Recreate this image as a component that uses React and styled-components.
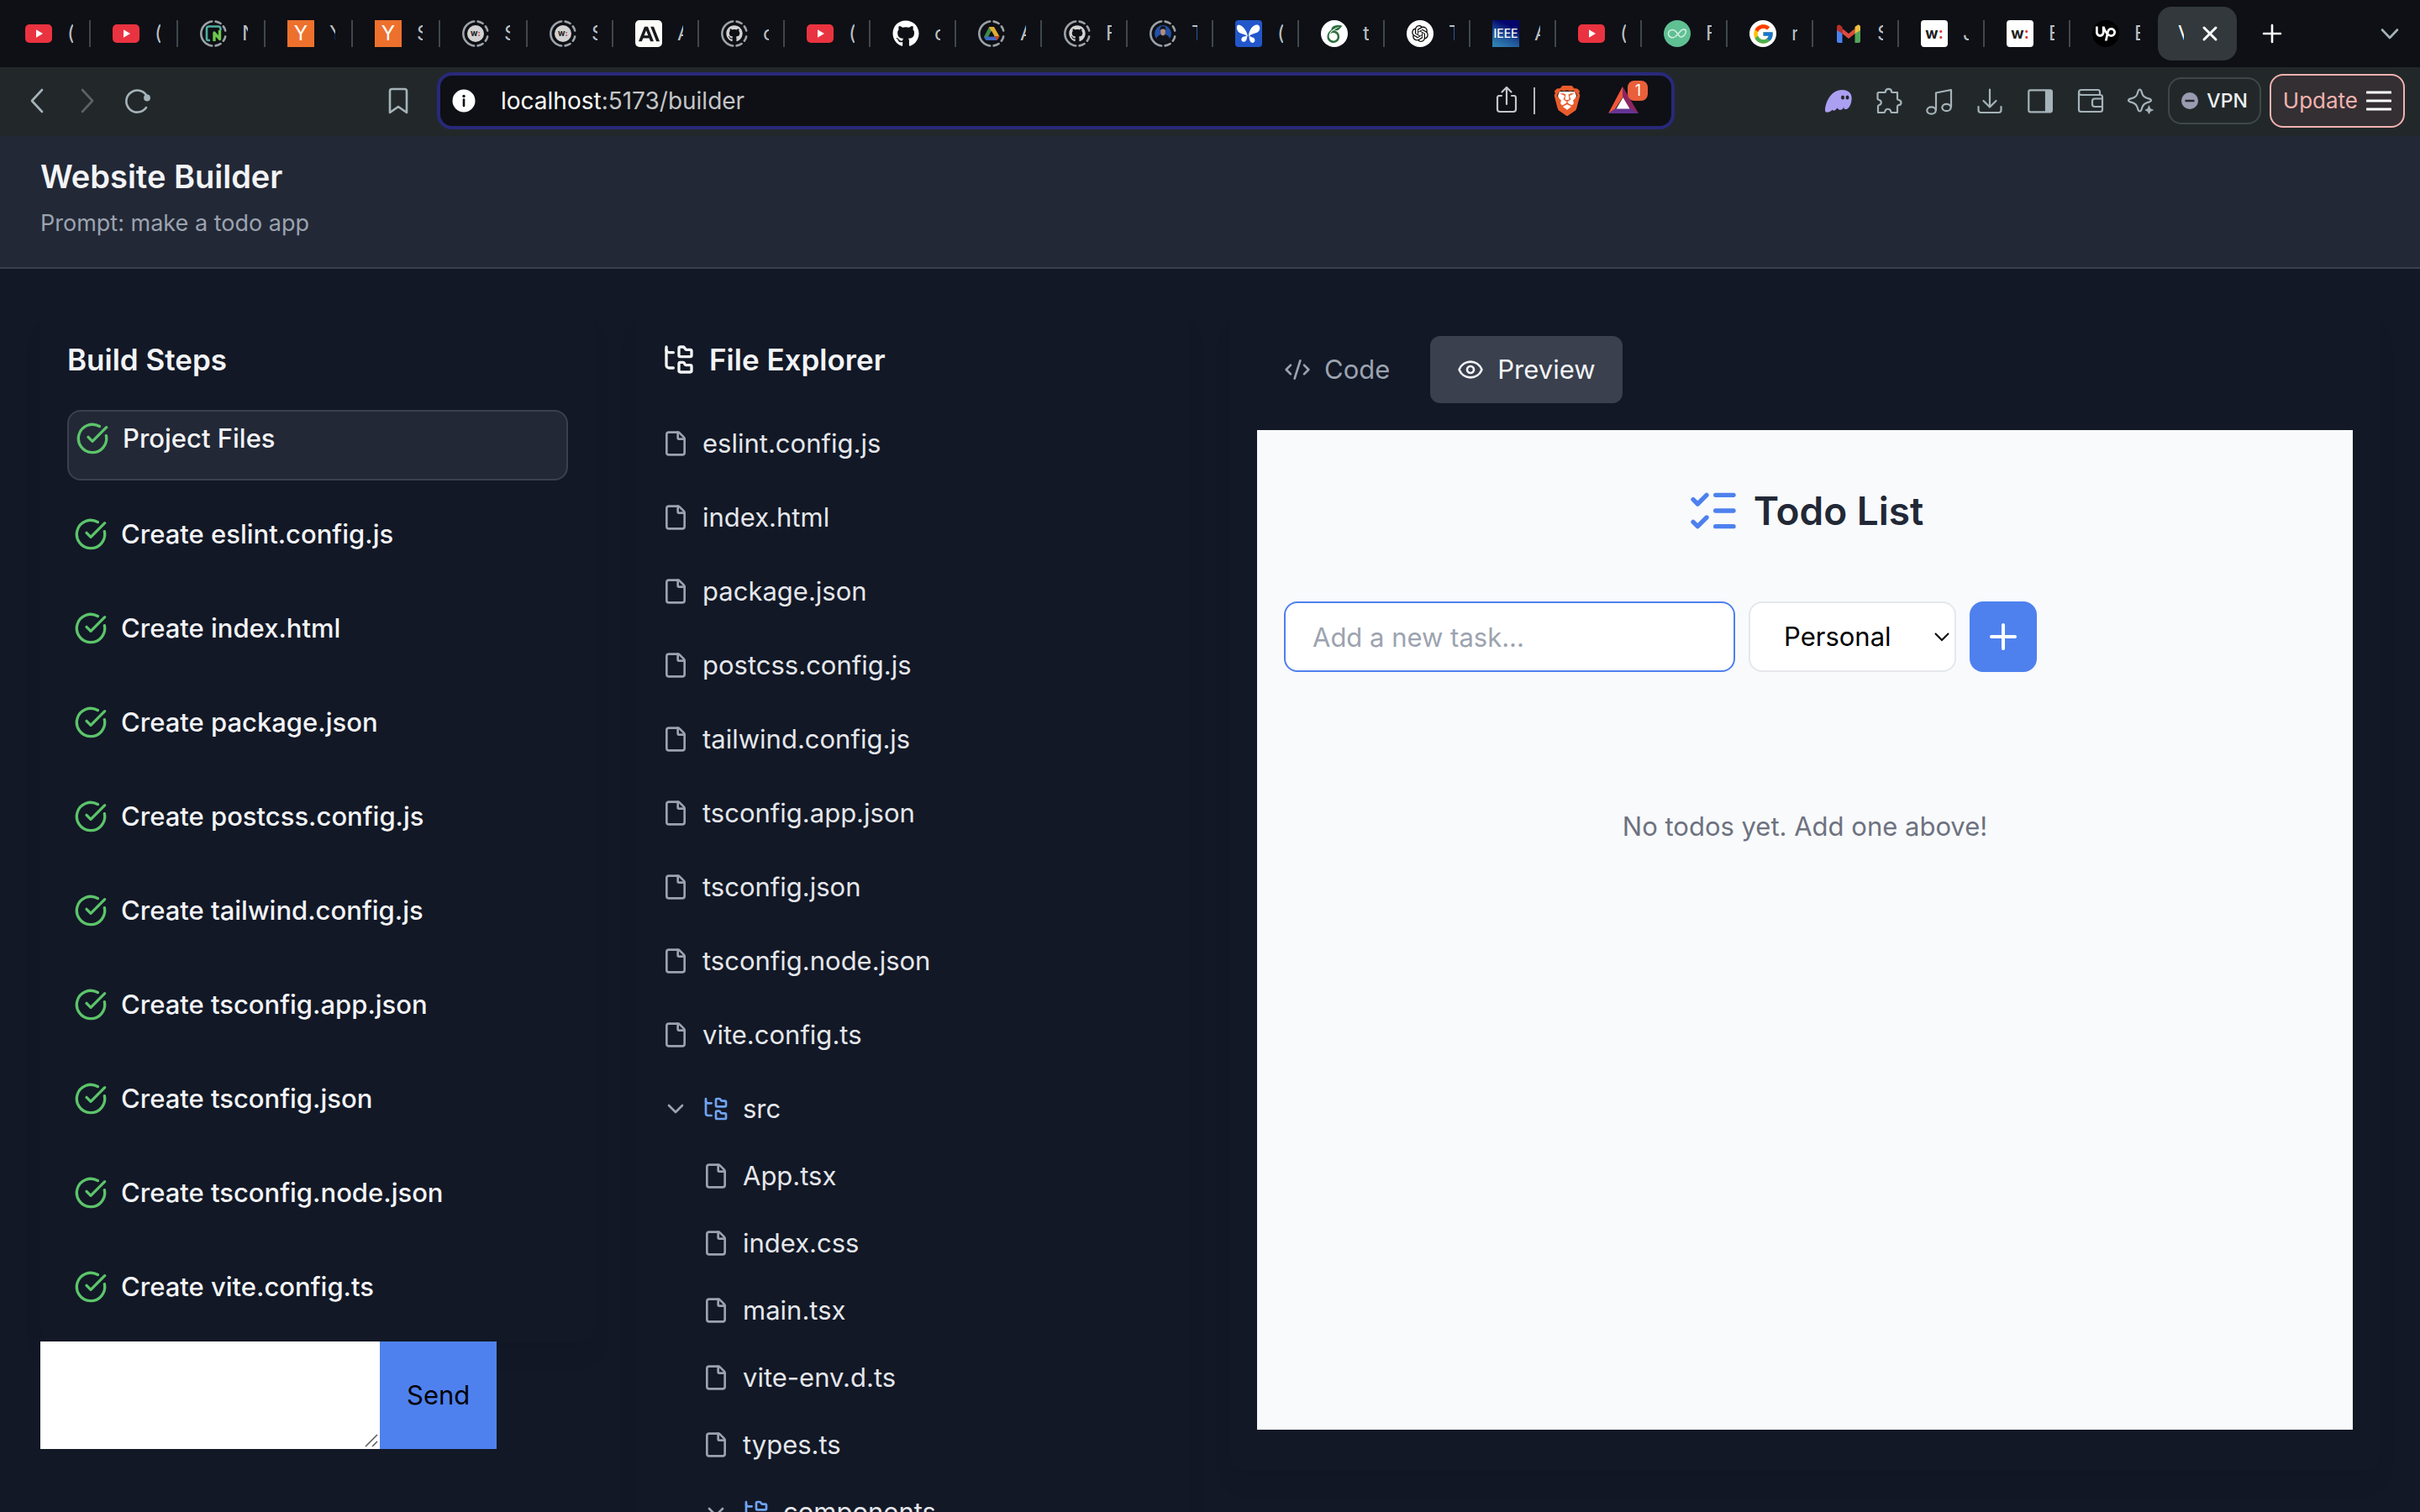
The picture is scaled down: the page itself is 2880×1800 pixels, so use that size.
import React, { useState } from "react";
import styled, { createGlobalStyle, css } from "styled-components";
import { CircleCheckBig, FolderTree, File, ChevronDown, CodeXml, Eye, ListChecks, Plus } from "lucide-react";
import { FaGithub } from "react-icons/fa";
import { FcGoogle } from "react-icons/fc";
import { SiOverleaf, SiUpwork, SiBrave, SiAnthropic } from "react-icons/si";
import { RiOpenaiFill } from "react-icons/ri";

const color = {
  tabBar: "#0e1015",
  tabActive: "#32383b",
  toolbar: "#22282a",
  chromeIcon: "#a5b3b9",
  page: "#121826",
  surface: "#222836",
  line: "#3a404e",
  text: "#f3f4f6",
  file: "#e5e7eb",
  muted: "#9ca3af",
  blue: "#4e81ee",
  folder: "#70a3f3",
  green: "#5cc46a",
};

const GlobalStyle = createGlobalStyle`
  * { box-sizing: border-box; }
  body { margin: 0; background: ${color.page}; }
  button, input, select, textarea { font: inherit; }
`;

const Shell = styled.div`
  display: flex;
  flex-direction: column;
  height: 100vh;
  overflow: hidden;
  background: ${color.page};
  color: ${color.text};
  font-family: Inter, "Liberation Sans", sans-serif;
  font-size: 31px;
  line-height: 48px;
`;

/* ---------- Browser tabs ---------- */

const TabBar = styled.nav`
  flex: none;
  display: flex;
  align-items: center;
  height: 80px;
  padding-left: 4px;
  background: ${color.tabBar};
`;

const Tab = styled.button`
  flex: 0 1 ${(p) => (p.$wide ? 104 : 102)}px;
  display: flex;
  align-items: center;
  height: 32px;
  min-width: 0;
  padding: 0 0 0 26px;
  border: 0;
  background: none;
`;

const TabTitle = styled.span`
  width: 7px;
  margin-left: 18px;
  overflow: hidden;
  color: #bdbfc1;
  font-size: 24px;
  line-height: 32px;
  text-align: left;
`;

const TabDivider = styled.span`
  width: 2px;
  height: 32px;
  margin-left: auto;
  background: #3f474b;
`;

const ActiveTab = styled.div`
  display: flex;
  align-items: center;
  justify-content: space-between;
  width: 94px;
  height: 64px;
  margin-left: 2px;
  padding: 0 12px 0 6px;
  border-radius: 16px;
  background: ${color.tabActive};
`;

const ActiveTitle = styled(TabTitle)`
  color: #ffffff;
`;

const GlyphButton = styled.button`
  flex: none;
  display: flex;
  align-items: center;
  justify-content: center;
  width: 40px;
  height: 40px;
  padding: 0;
  border: 0;
  background: none;
  color: ${(p) => p.$color || color.chromeIcon};
`;

const NewTab = styled(GlyphButton)`
  margin-left: 22px;
`;

const TabSearch = styled(GlyphButton)`
  margin-left: auto;
  margin-right: 16px;
`;

const Favicon = styled.span`
  flex: none;
  display: flex;
  align-items: center;
  justify-content: center;
  width: 32px;
  height: 32px;
  overflow: hidden;
  border-radius: ${(p) => p.$radius || 0}px;
  background: ${(p) => p.$bg || "none"};
  color: ${(p) => p.$color || "#ffffff"};
  font-size: ${(p) => p.$size || 16}px;
  line-height: 32px;
  font-weight: ${(p) => p.$weight || 400};
`;

const Red = styled.span`
  color: #d93a35;
`;

const Ring = ({ children }) => (
  <svg width="32" height="32" viewBox="0 0 32 32">
    <g fill="none" stroke="#9ba2a8" strokeWidth="2.6" strokeLinecap="round">
      <path d="M14.2 1.5A14.6 14.6 0 0 0 14.2 30.5" />
      <path d="M18.6 1.6Q22 2.2 24.6 4" />
      <path d="M27.8 7.4Q29.6 9.8 30.2 12.6" />
      <path d="M30.2 19.4Q29.6 22.2 27.8 24.6" />
      <path d="M24.6 28Q22 29.8 18.6 30.4" />
    </g>
    {children}
  </svg>
);

const icons = {
  youtube: (
    <svg width="32" height="32" viewBox="0 0 32 32">
      <rect y="5" width="32" height="22" rx="5" fill="#ea3340" />
      <path d="M13 11.2L21 16L13 20.8Z" fill="#fff" />
    </svg>
  ),
  neon: (
    <Ring>
      <path d="M12 24H10Q8 24 8 22V10Q8 7.500 10.500 7.500H21.500Q24.400 7.500 24.400 10V12" fill="none" stroke="#4fae9f" strokeWidth="2.600" />
      <path d="M17 25V15L23.500 22.500V12" fill="none" stroke="#6cc74f" strokeWidth="3.400" strokeLinejoin="round" />
    </Ring>
  ),
  yc: <Favicon $bg="#ed712d" $size={24}>Y</Favicon>,
  wRing: (
    <Ring>
      <circle cx="16" cy="16" r="10" fill="#d2d2d2" />
      <text x="16" y="19" textAnchor="middle" fontFamily="Inter, sans-serif" fontWeight="700" fontSize="10" fill="#222">
        w<tspan fill="#c4392f">:</tspan>
      </text>
    </Ring>
  ),
  anthropic: (
    <Favicon $bg="#fbfbf8" $radius={5} $color="#17191c">
      <SiAnthropic size={25} />
    </Favicon>
  ),
  githubRing: (
    <Ring>
      <g transform="translate(6 6)" color="#d2d2d2">
        <FaGithub size={20} />
      </g>
    </Ring>
  ),
  github: <Favicon><FaGithub size={32} /></Favicon>,
  drive: (
    <Ring>
      <path d="M13 8H19L12 20.500L9.500 24L7 20Z" fill="#3f8a48" />
      <path d="M13 8H19L25.500 19.600H19Z" fill="#e2ac33" />
      <path d="M9.800 19.600H22L22 24H9.800L7.200 20.400Z" fill="#3e68c6" />
      <path d="M19.400 19.600H25.500L22.600 24Z" fill="#c9442c" />
      <path d="M16 12.800L19.600 19.300H12.400Z" fill="#0e1015" />
    </Ring>
  ),
  portrait: (
    <Ring>
      <circle cx="16" cy="16" r="10" fill="#2250a6" />
      <path d="M8 22Q10 17.600 13.600 17.200L18.600 17.200Q22.600 17.800 24 22Q21 26 16 26T8 22Z" fill="#121318" />
      <path d="M13.200 10.500H18.800V14.500Q18.600 18 16 18.600Q13.400 18 13.200 14.500Z" fill="#b98e78" />
      <path d="M12.600 12.400Q12 7.200 16 7.200T19.400 12.400Q18.600 10.200 16 10.200T12.600 12.400Z" fill="#16130f" />
    </Ring>
  ),
  butterfly: (
    <svg width="32" height="32" viewBox="0 0 32 32">
      <rect width="32" height="32" rx="4" fill="#2257cc" />
      <path d="M15.200 20C14.500 14 9 5.500 4 5.500C0.800 6 1.500 12 4.500 14.500C7 16.600 12.500 16.500 15.200 20Z" fill="#fff" />
      <path d="M15.800 20C16 12 21 5 26.500 5.500C30.500 6.500 30 12.500 26.500 14.500C23 16.200 18.500 16 15.800 20Z" fill="#fff" />
      <path d="M14 18.500C14.500 22 13 26 9.500 25.800C6.500 25 7 21 9 20C11 19.200 12.500 19.500 14 18.500Z" fill="#fff" />
      <path d="M17 18.500C16 22 17.500 27 21 27C24.500 26 23.500 22 22 21C20 20 18.500 20 17 18.500Z" fill="#fff" />
    </svg>
  ),
  overleaf: <Favicon $bg="#fff" $radius={16} $color="#2d7040"><SiOverleaf size={21} /></Favicon>,
  openai: <Favicon $bg="#fff" $radius={16} $color="#111"><RiOpenaiFill size={24} /></Favicon>,
  ieee: <Favicon $bg="linear-gradient(25deg, #2f7fb0 10%, #1c4a94 45%, #04066e 75%)" $size={14} $weight={500}>IEEE</Favicon>,
  infinity: (
    <svg width="32" height="32" viewBox="0 0 32 32">
      <circle cx="16" cy="16" r="16" fill="#5fc093" />
      <path d="M13 20C10 22 5.500 20 5.500 16S10.500 10 14 13L19 19.500C21.500 21.500 26.500 17 26.500 13.500S22 10.500 20.500 12.500L13.500 20" fill="none" stroke="#d5f0e3" strokeWidth="1.500" />
    </svg>
  ),
  google: <Favicon $bg="#fff" $radius={16}><FcGoogle size={27} /></Favicon>,
  gmail: (
    <svg width="32" height="32" viewBox="0 0 32 32">
      <path d="M2 8V25Q2 27 4 27H8.500V12Z" fill="#4c82ee" />
      <path d="M23.500 27H28Q30 27 30 25V8L23.500 13Z" fill="#55a65a" />
      <path d="M8.500 10L16 16L23.500 10V16L16 22L8.500 16Z" fill="#dc4b3e" />
      <path d="M2 10V8Q2 5 5 5.500L8.500 8V16L2 12Z" fill="#b92f2b" />
      <path d="M30 10V8Q30 5 27 5.500L23.500 8V16L30 12Z" fill="#eebd41" />
    </svg>
  ),
  w: <Favicon $bg="#fff" $radius={4} $color="#1b1b1b" $size={18} $weight={700}>w<Red>:</Red></Favicon>,
  upwork: <Favicon $bg="#000" $radius={16}><SiUpwork size={24} /></Favicon>,
};

const tabs = [
  ["youtube", "("], ["youtube", "("], ["neon", "N"], ["yc", "Y"], ["yc", "S"], ["wRing", "S"], ["wRing", "S"],
  ["anthropic", "A"], ["githubRing", "c"], ["youtube", "("], ["github", "c"], ["drive", "A"], ["githubRing", "F"],
  ["portrait", "T"], ["butterfly", "("], ["overleaf", "t"], ["openai", "T"], ["ieee", "A"], ["youtube", "("],
  ["infinity", "F"], ["google", "r"], ["gmail", "S"], ["w", "J"], ["w", "E"], ["upwork", "E"],
];

/* ---------- Browser toolbar ---------- */

const Toolbar = styled.div`
  flex: none;
  display: flex;
  align-items: center;
  height: 82px;
  padding: 0 18px 2px 24px;
  background: ${color.toolbar};
`;

const ToolGroup = styled.div`
  flex: none;
  display: flex;
  align-items: center;
  gap: 20px;
`;

const AddressGroup = styled.div`
  flex: 1;
  min-width: 0;
  display: flex;
  align-items: center;
  gap: 26px;
  margin: 0 175px 0 270px;
`;

const AddressBar = styled.div`
  flex: 1;
  min-width: 0;
  display: flex;
  align-items: center;
  height: 68px;
  padding: 0 28px 0 14px;
  border: 4px solid #28297a;
  border-radius: 18px;
  background: ${color.tabBar};
`;

const Address = styled.a`
  flex: 1;
  margin-left: 30px;
  color: #c4c5c7;
  font-size: 28px;
  line-height: 40px;
  text-decoration: none;
`;

const Host = styled.span`
  color: #ffffff;
`;

const AddressDivider = styled.span`
  width: 2px;
  height: 32px;
  margin: 0 18px 0 12px;
  background: #b4b6b8;
`;

const ShieldStack = styled.span`
  display: grid;
  place-items: center;
  color: #ea5b2b;

  & > * { grid-area: 1 / 1; }
`;

const RewardsButton = styled.button`
  position: relative;
  display: flex;
  width: 48px;
  height: 48px;
  margin-left: 28px;
  padding: 0;
  border: 0;
  background: none;
`;

const Badge = styled.span`
  position: absolute;
  top: 0;
  right: 0;
  width: 24px;
  height: 24px;
  border-radius: 8px;
  background: #e9603a;
  color: #ffffff;
  font-size: 18px;
  line-height: 24px;
  text-align: center;
`;

const PillButton = styled.button`
  flex: none;
  display: flex;
  align-items: center;
  gap: 10px;
  white-space: nowrap;
  border-radius: 16px;
  line-height: 32px;
`;

const VpnButton = styled(PillButton)`
  height: 56px;
  margin-left: 12px;
  padding: 0 14px;
  border: 2px solid #3f474b;
  background: none;
  color: #f0f1f3;
  font-size: 23px;
  font-weight: 500;
`;

const UpdateButton = styled(PillButton)`
  height: 64px;
  margin-left: 10px;
  padding: 0 14px;
  border: 2px solid #f2b2b0;
  background: #332f32;
  color: #f2b2b0;
  font-size: 26px;
`;

const Stroke = ({ children, size = 40, width = 2.2 }) => (
  <svg width={size} height={size} viewBox="0 0 40 40" fill="none" stroke="currentColor" strokeWidth={width} strokeLinecap="round" strokeLinejoin="round">
    {children}
  </svg>
);

const extensions = [
  ["Wallet", (
    <svg width="40" height="40" viewBox="0 0 40 40">
      <path d="M4 32C4 22 11 7 24 7C33 7 36.500 12 35.500 19C35 25 32 29.500 29 30C26.500 30.500 26 29 26.500 27C25 30.500 22.500 31.500 20.500 30.500C19.500 30 19 29 18.500 28.500C16.500 31.500 14.500 32.500 13 31C12.500 30.500 12.500 30 12.500 31C10 33.500 4.500 35 4 32Z" fill="#ab9ff2" />
      <ellipse cx="25" cy="16" rx="2" ry="2.600" fill="#22282a" />
      <ellipse cx="30.500" cy="16" rx="2" ry="2.600" fill="#22282a" />
    </svg>
  )],
  ["Extensions", (
    <Stroke>
      <path d="M7.500 10H14.500C16 10 16 9.500 16 8.500C16.500 5 22.500 5 23 8.500C23 9.500 23 10 24.500 10H30V17.500C30 18.500 30.500 18.800 31.500 19C35.500 19.800 35.500 24.500 31.500 25.200C30.500 25.400 30 25.800 30 27V34H23.500C22.500 34 22.500 33.500 22 32C21 29 16.500 29 15.500 32C15 33.500 15 34 14 34H7V26.500C7 25.500 7.500 25.500 8.500 25C11.500 24 11.500 20 8.500 19C7.500 18.600 6.500 18.600 6.500 17.500V11Z" />
    </Stroke>
  )],
  ["Media", (
    <Stroke>
      <path d="M16 31V10.500L34 7V27" />
      <ellipse cx="10.500" cy="31.500" rx="5.200" ry="4.200" />
      <ellipse cx="28.500" cy="28" rx="5.200" ry="4.200" />
    </Stroke>
  )],
  ["Downloads", <Stroke><path d="M20 6.500V27M12.500 20L20 27.500L27.500 20M6.500 27V31Q6.500 34 9.500 34H30.500Q33.500 34 33.500 31V27" /></Stroke>],
  ["Sidebar", (
    <Stroke><rect x="6.300" y="7.300" width="27.600" height="26" rx="2" /><path d="M27 8H33V32.500H27Z" fill="currentColor" /></Stroke>
  )],
  ["Brave Wallet", (
    <Stroke>
      <path d="M6 10V30.500Q6 33 8.500 33H31.500Q34 33 34 30.500V15.500Q34 13 31.500 13H9Q6 13 6 10Q6 7 9 7H28.500Q31 7 31 9.500V13" />
      <path d="M34 17.500H25Q22 17.500 22 20.500V24Q22 27 25 27H34" />
    </Stroke>
  )],
  ["Leo", (
    <Stroke>
      <path d="M18.500 6.500C20.500 6.500 20.500 9 21.500 12C22.500 15 24 15.800 27 16.800C30 17.800 32 17.800 32 19.500S30 21.200 27 22.200C24 23.200 22.500 24.500 21.500 27.500C20.500 30.500 20.500 32.500 18.500 32.500S16.500 30.500 15.500 27.500C14.500 24.500 13 23.200 10 22.200C7 21.200 5 21.200 5 19.500S7 17.800 10 16.800C13 15.800 14.500 15 15.500 12C16.500 9 16.500 6.500 18.500 6.500Z" />
      <path d="M29.500 26L31 29.500L34.500 31L31 32.500L29.500 35.500L28 32.500L25 31L28 29.500Z" fill="currentColor" strokeWidth="0.800" />
    </Stroke>
  )],
];

/* ---------- Builder page ---------- */

const Header = styled.header`
  flex: none;
  padding: 20px 48px 32px;
  border-bottom: 2px solid ${color.line};
  background: ${color.surface};
`;

const Title = styled.h1`
  margin: 0 0 8px;
  font-size: 38px;
  line-height: 56px;
  font-weight: 600;
`;

const Prompt = styled.p`
  margin: 0;
  color: ${color.muted};
  font-size: 27px;
  line-height: 40px;
`;

const Main = styled.main`
  flex: 1;
  min-height: 0;
  display: grid;
  grid-template-columns: repeat(4, minmax(0, 1fr));
  grid-template-rows: minmax(0, 1fr);
  gap: 48px;
  padding: 48px 48px 50px;
`;

const panel = css`
  padding: 32px;
  border-radius: 16px;
  background: ${color.page};
  box-shadow: 0 20px 30px -6px rgba(0, 0, 0, 0.07);
`;

const LeftColumn = styled.div`
  min-height: 0;
  display: flex;
  flex-direction: column;
  padding-bottom: 25px;
`;

const StepsPanel = styled.section`
  ${panel}
  flex: 1;
  min-height: 0;
  overflow: hidden;
`;

const PanelTitle = styled.h2`
  display: flex;
  align-items: center;
  gap: 16px;
  margin: 0 0 32px;
  font-size: 35px;
  line-height: 56px;
  font-weight: 600;
`;

const StepList = styled.ol`
  display: flex;
  flex-direction: column;
  gap: 32px;
  margin: 0;
  padding: 0;
  list-style: none;
`;

const Step = styled.li`
  display: flex;
  align-items: center;
  gap: 16px;
  padding: 8px 8px 24px;
  border-radius: 16px;
  font-weight: 500;
  ${(p) =>
    p.$current &&
    css`
      border: 2px solid ${color.line};
      background: ${color.surface};
    `}

  svg { color: ${color.green}; }
`;

const ChatForm = styled.form`
  flex: none;
  display: flex;
  height: 128px;
`;

const ChatField = styled.div`
  display: grid;
  width: 404px;

  & > * { grid-area: 1 / 1; }
  & > svg { place-self: end; margin: 2px; pointer-events: none; }
`;

const ChatInput = styled.textarea`
  height: 128px;
  padding: 16px;
  border: 0;
  outline: 0;
  resize: none;
  background: #ffffff;
  color: #000000;
`;

const SendButton = styled.button`
  padding: 0 32px;
  border: 0;
  background: ${color.blue};
  color: #000000;
`;

const ExplorerPanel = styled.section`
  ${panel}
  align-self: start;
`;

const Tree = styled.ul`
  display: flex;
  flex-direction: column;
  gap: ${(p) => (p.$nested ? 0 : 8)}px;
  margin: 0;
  padding: 0 0 0 ${(p) => (p.$nested ? 48 : 0)}px;
  list-style: none;
`;

const TreeRow = styled.button`
  display: flex;
  align-items: center;
  gap: 16px;
  width: 100%;
  padding: 16px 0;
  border: 0;
  background: none;
  color: ${color.file};
  text-align: left;

  svg { flex: none; color: ${color.muted}; }
  svg.folder { color: ${color.folder}; }
`;

const Workspace = styled.section`
  ${panel}
  grid-column: span 2;
  display: flex;
  flex-direction: column;
  gap: 32px;
  padding-bottom: 48px;
`;

const ViewTabs = styled.div`
  display: flex;
  gap: 16px;
`;

const ViewTab = styled.button`
  display: flex;
  align-items: center;
  gap: 16px;
  padding: 16px 32px;
  border: 0;
  border-radius: 12px;
  background: ${(p) => (p.$active ? color.line : "none")};
  color: ${(p) => (p.$active ? color.text : color.muted)};
`;

const Preview = styled.div`
  flex: 1;
  padding: 64px 32px;
  background: #f9fafc;
`;

const TodoTitle = styled.h1`
  display: flex;
  align-items: center;
  justify-content: center;
  gap: 16px;
  margin: 0 0 76px;
  color: #222836;
  font-size: 46px;
  line-height: 64px;
  font-weight: 600;

  svg { color: ${color.blue}; }
`;

const TodoForm = styled.form`
  display: flex;
  gap: 16px;
  max-width: 896px;
`;

const TaskInput = styled.input`
  flex: 1;
  min-width: 0;
  height: 84px;
  padding: 16px 32px;
  border: 2px solid ${color.blue};
  border-radius: 16px;
  outline: 0;
  background: #ffffff;
  color: #000000;

  &::placeholder { color: ${color.muted}; opacity: 1; }
`;

const SelectWrap = styled.div`
  display: grid;
  align-items: center;
  width: 247px;

  & > * { grid-area: 1 / 1; }
  & > svg { justify-self: end; margin-right: 8px; color: #000000; pointer-events: none; }
`;

const CategorySelect = styled.select`
  width: 100%;
  height: 84px;
  padding: 0 32px 0 40px;
  appearance: none;
  border: 2px solid #e5e7eb;
  border-radius: 16px;
  background: #ffffff;
  color: #000000;
`;

const AddButton = styled.button`
  display: flex;
  align-items: center;
  padding: 16px;
  border: 0;
  border-radius: 16px;
  background: ${color.blue};
  color: #ffffff;
`;

const Empty = styled.p`
  margin: 160px 0 0;
  color: #6d7280;
  text-align: center;
`;

const rootFiles = [
  "eslint.config.js", "index.html", "package.json", "postcss.config.js", "tailwind.config.js",
  "tsconfig.app.json", "tsconfig.json", "tsconfig.node.json", "vite.config.ts",
];
const srcFiles = ["App.tsx", "index.css", "main.tsx", "vite-env.d.ts", "types.ts"];
const steps = ["Project Files", ...rootFiles.map((name) => `Create ${name}`)];

const FileRow = ({ name }) => (
  <li>
    <TreeRow type="button"><File size={32} />{name}</TreeRow>
  </li>
);

const FolderRow = ({ name, children }) => (
  <li>
    <TreeRow type="button">
      <ChevronDown size={32} />
      <FolderTree className="folder" size={32} />
      {name}
    </TreeRow>
    {children}
  </li>
);

const BrowserTabs = () => (
  <TabBar aria-label="Browser tabs">
    {tabs.map(([icon, title], i) => (
      <Tab key={i} type="button" $wide={i < 6}>
        <Favicon>{icons[icon]}</Favicon>
        <TabTitle>{title}</TabTitle>
        {i < tabs.length - 1 && <TabDivider />}
      </Tab>
    ))}
    <ActiveTab>
      <ActiveTitle>V</ActiveTitle>
      <GlyphButton type="button" aria-label="Close tab" $color="#fff">
        <Stroke width={3}><path d="M13 13L27 27M27 13L13 27" /></Stroke>
      </GlyphButton>
    </ActiveTab>
    <NewTab type="button" aria-label="New tab" $color="#fff">
      <Stroke width={2.6}><path d="M20 10V30M10 20H30" /></Stroke>
    </NewTab>
    <TabSearch type="button" aria-label="Search tabs">
      <Stroke width={2.6}><path d="M11 15.500L20 25L29 15.500" /></Stroke>
    </TabSearch>
  </TabBar>
);

const BrowserToolbar = () => (
  <Toolbar>
    <ToolGroup>
      <GlyphButton type="button" aria-label="Back"><Stroke width={2.6}><path d="M26 7L14 20L26 33" /></Stroke></GlyphButton>
      <GlyphButton type="button" aria-label="Forward" $color="#5d6264"><Stroke width={2.6}><path d="M14 7L26 20L14 33" /></Stroke></GlyphButton>
      <GlyphButton type="button" aria-label="Reload">
        <Stroke width={2.6}>
          <path d="M30 28A13 13 0 1 1 31.500 16" />
          <circle cx="31" cy="16.500" r="2.600" fill="currentColor" />
        </Stroke>
      </GlyphButton>
    </ToolGroup>
    <AddressGroup>
      <GlyphButton type="button" aria-label="Bookmark">
        <Stroke width={2.6}><path d="M10 8.500Q10 6 12.500 6H27.500Q30 6 30 8.500V34L20 27L10 34Z" /></Stroke>
      </GlyphButton>
      <AddressBar>
        <svg width="28" height="28" viewBox="0 0 28 28">
          <circle cx="14" cy="14" r="13.500" fill="#fff" />
          <circle cx="14" cy="8.500" r="1.700" fill="#0e1015" />
          <path d="M14 12.500V20" stroke="#0e1015" strokeWidth="2.600" strokeLinecap="round" />
        </svg>
        <Address href="#builder"><Host>localhost</Host>:5173/builder</Address>
        <GlyphButton type="button" aria-label="Share" $color="#c4c6c9">
          <Stroke><path d="M20 24V4.500M14.500 9.500L20 4L25.500 9.500M14 14H11Q9 14 9 17V30Q9 33 12 33H28Q31 33 31 30V17Q31 14 29 14H26" /></Stroke>
        </GlyphButton>
        <AddressDivider />
        <GlyphButton type="button" aria-label="Brave Shields">
          <ShieldStack>
            <svg width="36" height="36" viewBox="0 0 36 36"><path d="M9 7H27L29 12L25 26L18 32L11 26L7 12Z" fill="#fff" /></svg>
            <SiBrave size={36} />
          </ShieldStack>
        </GlyphButton>
        <RewardsButton type="button" aria-label="Brave Rewards">
          <svg width="38" height="48" viewBox="0 0 38 48">
            <path d="M18 7V20L9 34L1 39Z" fill="#f0573a" />
            <path d="M18 7L37 39L26 34L18 20Z" fill="#8c2560" />
            <path d="M1 39L10 33H27L37 39Z" fill="#653494" />
            <path d="M18.500 20L26.500 33.500H10.500Z" fill="#fff" />
          </svg>
          <Badge>1</Badge>
        </RewardsButton>
      </AddressBar>
    </AddressGroup>
    <ToolGroup>
      {extensions.map(([label, icon]) => (
        <GlyphButton key={label} type="button" aria-label={label}>{icon}</GlyphButton>
      ))}
    </ToolGroup>
    <VpnButton type="button">
      <svg width="20" height="20" viewBox="0 0 20 20">
        <circle cx="10" cy="10" r="10" fill="#9a9ab0" />
        <path d="M5.500 10H14.500" stroke="#22282a" strokeWidth="2.400" strokeLinecap="round" />
      </svg>
      VPN
    </VpnButton>
    <UpdateButton type="button">
      Update
      <svg width="30" height="24" viewBox="0 0 30 24">
        <path d="M1 2H29M1 12H29M1 22H29" stroke="#fff" strokeWidth="3" strokeLinecap="round" />
      </svg>
    </UpdateButton>
  </Toolbar>
);

export default function App() {
  const [message, setMessage] = useState("");
  const [task, setTask] = useState("");
  const stop = (event) => event.preventDefault();

  return (
    <Shell>
      <GlobalStyle />
      <BrowserTabs />
      <BrowserToolbar />
      <Header>
        <Title>Website Builder</Title>
        <Prompt>Prompt: make a todo app</Prompt>
      </Header>
      <Main>
        <LeftColumn>
          <StepsPanel>
            <PanelTitle>Build Steps</PanelTitle>
            <StepList>
              {steps.map((step, i) => (
                <Step key={step} $current={i === 0}><CircleCheckBig size={40} />{step}</Step>
              ))}
            </StepList>
          </StepsPanel>
          <ChatForm onSubmit={stop}>
            <ChatField>
              <ChatInput aria-label="Message" value={message} onChange={(e) => setMessage(e.target.value)} />
              <svg width="16" height="16" viewBox="0 0 16 16" stroke="#5a5a5a" strokeWidth="1.500">
                <path d="M1 15L15 1M9 15L15 9" />
              </svg>
            </ChatField>
            <SendButton type="submit">Send</SendButton>
          </ChatForm>
        </LeftColumn>
        <ExplorerPanel>
          <PanelTitle><FolderTree size={40} />File Explorer</PanelTitle>
          <Tree>
            {rootFiles.map((name) => <FileRow key={name} name={name} />)}
            <FolderRow name="src">
              <Tree $nested>
                {srcFiles.map((name) => <FileRow key={name} name={name} />)}
                <FolderRow name="components" />
              </Tree>
            </FolderRow>
          </Tree>
        </ExplorerPanel>
        <Workspace>
          <ViewTabs>
            <ViewTab type="button"><CodeXml size={32} />Code</ViewTab>
            <ViewTab type="button" $active><Eye size={32} />Preview</ViewTab>
          </ViewTabs>
          <Preview>
            <TodoTitle><ListChecks size={64} />Todo List</TodoTitle>
            <TodoForm onSubmit={stop}>
              <TaskInput aria-label="New task" placeholder="Add a new task..." value={task} onChange={(e) => setTask(e.target.value)} />
              <SelectWrap>
                <CategorySelect aria-label="Category" defaultValue="Personal">
                  <option>Personal</option>
                  <option>Work</option>
                </CategorySelect>
                <svg width="18" height="18" viewBox="0 0 18 18" fill="none" stroke="currentColor" strokeWidth="2">
                  <path d="M1 5L9 13L17 5" />
                </svg>
              </SelectWrap>
              <AddButton type="submit" aria-label="Add task"><Plus size={48} /></AddButton>
            </TodoForm>
            <Empty>No todos yet. Add one above!</Empty>
          </Preview>
        </Workspace>
      </Main>
    </Shell>
  );
}
